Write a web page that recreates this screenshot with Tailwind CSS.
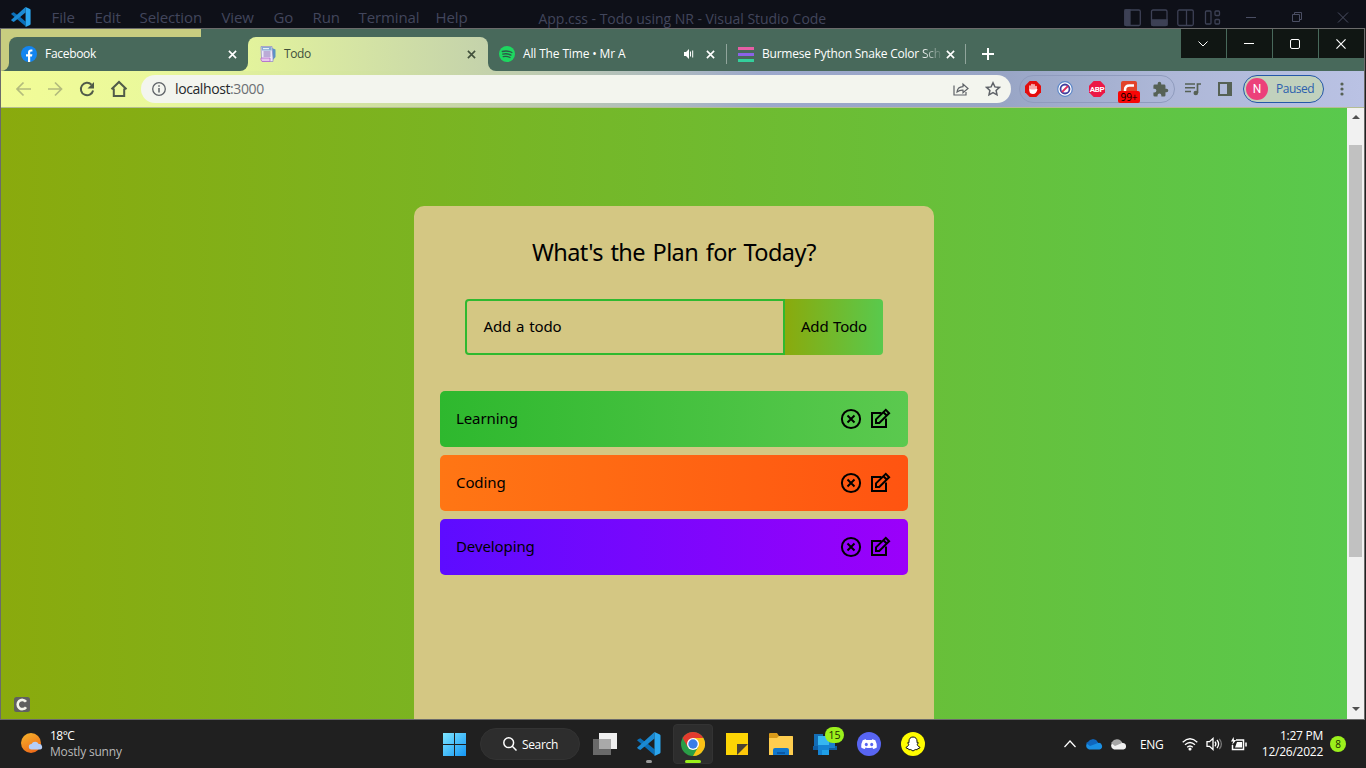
<!DOCTYPE html>
<html lang="en">
<head>
<meta charset="utf-8">
<title>Todo</title>
<script src="https://cdn.jsdelivr.net/npm/@tailwindcss/browser@4"></script>
</head>
<body class="w-[1366px] h-[768px] overflow-hidden bg-[#202020] font-['Open_Sans','Noto_Sans',sans-serif] flex flex-col">

<svg class="hidden">
  <defs>
    <symbol id="x" viewBox="0 0 10 10"><path d="M1 1l8 8M9 1l-8 8" stroke="currentColor" stroke-width="1.8" fill="none"/></symbol>
    <symbol id="vscode" viewBox="0 0 24 24">
      <path fill="#0a6fb8" d="M17.5 1L8 9.8 3.3 6.200 1.200 7.200 0 8.300 17.500 23.200V17.300L11 12z"/>
      <path fill="#1b8ad3" d="M17.500 0L17.500 6.500 3.300 17.900 1.200 16.900 0 15.700z"/>
      <path fill="#2ba7f0" d="M17.500 0l5.300 2.500q.700.400.700 1.200v16.600q0 .800-.700 1.200L17.500 24z"/>
    </symbol>
    <symbol id="close" viewBox="0 0 24 24"><circle cx="12" cy="12" r="9.100" fill="none" stroke="#000" stroke-width="2"/><path d="M8.500 8.500l7 7M15.500 8.500l-7 7" stroke="#000" stroke-width="2"/></symbol>
    <symbol id="edit" viewBox="0 0 24 24"><path d="M13.500 6H4v14h14V11.500" fill="none" stroke="#000" stroke-width="2"/><path d="M8 16v-3.600L17.800 2.900l3.300 3.300L11.300 16zM15.400 5.200l3.300 3.300" fill="none" stroke="#000" stroke-width="2"/></symbol>
  </defs>
</svg>

<!-- Editor title bar -->
<header class="h-7 shrink-0 bg-[#0e1018] flex items-end text-[#42465c]">
  <svg class="w-5 h-5 ml-[10.500px] mb-px"><use href="#vscode"/></svg>
  <nav class="flex ml-[21px] text-[15px] leading-[21px] tracking-[-0.100px]">
    <span class="w-[43px]">File</span><span class="w-[45px]">Edit</span><span class="w-[82px]">Selection</span><span class="w-[52px]">View</span><span class="w-[39px]">Go</span><span class="w-[46px]">Run</span><span class="w-[77px]">Terminal</span><span class="w-[103px]">Help</span>
  </nav>
  <span class="text-[14px] leading-[19px] whitespace-nowrap w-[585px] tracking-[-0.030px]">App.css - Todo using NR - Visual Studio Code</span>
  <svg class="w-[98px] h-[18px] mb-[1px]" viewBox="0 0 98 18" fill="none" stroke="#3d4155" stroke-width="1.300">
    <rect x=".8" y="1" width="15.500" height="15.500" rx="1.500"/><path d="M1 1h5v15H1z" fill="#3d4155"/>
    <rect x="27.500" y="1" width="15.500" height="15.500" rx="1.500"/><path d="M28 11h15v5H28z" fill="#3d4155"/>
    <rect x="53.800" y="1" width="15.500" height="15.500" rx="1.500"/><path d="M62.500 1v15"/>
    <rect x="81.500" y="2" width="5.500" height="13" rx="1"/><rect x="91" y="2" width="4.500" height="4.500" rx="1"/><rect x="91" y="10.500" width="4.500" height="4.500" rx="1"/>
  </svg>
  <svg class="w-[106px] h-[12px] ml-[22px] mb-[5px]" viewBox="0 0 106 12" fill="none" stroke="#4a4e63" stroke-width="1">
    <path d="M2 6.500h10M48.500 3.500h7v7h-7zM50.500 3V1.500h7v7H56M94 1.500l10 10M104 1.500l-10 10"/>
  </svg>
</header>

<!-- Browser window -->
<main class="h-[692px] shrink-0 w-[1365px] border border-[#6b6b6b] flex flex-col overflow-hidden">
  <!-- Tab strip -->
  <div class="h-[42px] shrink-0 bg-[#48695b] flex items-end relative text-white text-[12px]">
    <div class="absolute left-0 top-0 w-[200px] h-2 bg-[#c8cd80]"></div>
    <div class="absolute left-0 top-2 w-4 h-[34px] bg-[#c8cd80]"></div>
    <div class="absolute left-0 bottom-0 w-2 h-2 bg-[#48695b]"></div>
    <div class="absolute left-0 bottom-0 w-2 h-2 bg-[#c8cd80] rounded-br-lg"></div>
    <div class="w-[239px] ml-2 h-[34px] rounded-tl-lg bg-[#48695b] flex items-center relative pl-[12px]">
      <svg class="w-4 h-4" viewBox="0 0 16 16"><circle cx="8" cy="8" r="8" fill="#1385f0"/><path d="M7 16v-5.400H5V8.200h2V6.500C7 4.500 8.100 3.400 9.900 3.400l1.500.1v2h-1C9.500 5.500 9.200 6 9.200 6.600v1.600h2.200l-.4 2.400H9.200V16z" fill="#fff"/></svg>
      <span class="ml-2 tracking-[-0.300px]">Facebook</span>
      <svg class="w-[9px] h-[9px] ml-auto mr-[11px]"><use href="#x"/></svg>
    </div>
    <div class="w-[240px] h-[34px] rounded-t-lg bg-linear-to-r from-[#e3f39c] to-[#c4d2ab] flex items-center relative pl-[12px] text-[#41503b]">
      <div class="absolute -left-2 bottom-0 w-2 h-2 bg-[#e6f69a]"></div><div class="absolute -left-2 bottom-0 w-2 h-2 bg-[#48695b] rounded-br-lg"></div>
      <div class="absolute -right-2 bottom-0 w-2 h-2 bg-[#c4d2ab]"></div><div class="absolute -right-2 bottom-0 w-2 h-2 bg-[#48695b] rounded-bl-lg"></div>
      <svg class="w-4 h-4" viewBox="0 0 16 16"><path d="M12 2l3.500 1.500V11L12 15z" fill="#5b93c4"/><path d="M1 .5h11L13 12v3.500H2.500L1.500 12z" fill="#ece8f8" stroke="#8f86c4" stroke-width=".7"/><path d="M1.500 1h10v3.500H2z" fill="#86abd2"/><path d="M3 2.700h6" stroke="#fff"/><path d="M3.500 6h7M3.500 8h7M3.500 10h7" stroke="#8a6fb5" stroke-width="1"/><path d="M1 12h9v3.500H2Q.500 14 1 12z" fill="#e7c4ee" stroke="#b06ac8" stroke-width=".8"/></svg>
      <span class="ml-2 tracking-[-0.400px]">Todo</span>
      <svg class="w-[9px] h-[9px] ml-auto mr-[12px]"><use href="#x"/></svg>
    </div>
    <div class="w-[239px] h-[34px] flex items-center pl-[11px]">
      <svg class="w-4 h-4" viewBox="0 0 16 16"><circle cx="8" cy="8" r="8" fill="#1ed760"/><path d="M3.300 5.500q5-1.400 9.600 1M3.700 8.200q4.400-1.200 8.200.9M4.200 10.700q3.600-1 6.800.8" fill="none" stroke="#2c5947" stroke-width="1.300" stroke-linecap="round"/></svg>
      <span class="ml-2 tracking-[-0.150px]">All The Time • Mr A</span>
      <svg class="w-[10px] h-[10px] ml-auto" viewBox="0 0 10 10"><path d="M0 3h2l3-3v10L2 7H0z" fill="#fff"/><path d="M6.500 2.500v5M8.700 1.500v7" stroke="#fff"/></svg>
      <svg class="w-[9px] h-[9px] ml-[12px] mr-[12px]"><use href="#x"/></svg>
    </div>
    <div class="w-[239px] h-[34px] flex items-center">
      <i class="w-px h-5 bg-[#91a59c] -ml-px"></i>
      <div class="w-4 h-[15px] ml-[11px] flex flex-col justify-between"><i class="h-[3px] bg-[#e65fa5]"></i><i class="h-[3px] bg-[#8b62e8]"></i><i class="h-[3px] bg-[#34d09c]"></i></div>
      <span class="ml-2 w-[177px] whitespace-nowrap tracking-[-0.220px]">Burmese Python Snake Color <span class="bg-linear-to-r from-white to-[#5f7c70] bg-clip-text text-transparent">Sch</span></span>
      <svg class="w-[9px] h-[9px] ml-[7px]"><use href="#x"/></svg>
      <i class="w-px h-5 bg-[#91a59c] ml-auto"></i>
    </div>
    <svg class="w-3 h-3 ml-4 mb-[11px]" viewBox="0 0 12 12"><path d="M6 0v12M0 6h12" stroke="#fff" stroke-width="2"/></svg>
    <div class="ml-auto self-start flex gap-px">
      <div class="w-[45px] h-[29px] bg-[#101613] flex items-center justify-center pr-px"><svg class="w-[10px] h-3" viewBox="0 0 10 12"><path d="M.5 3.500L5 8l4.500-4.500" fill="none" stroke="#fff"/></svg></div>
      <div class="w-[45px] h-[29px] bg-[#101613] flex items-center justify-center pr-px"><i class="w-[10px] h-px bg-white"></i></div>
      <div class="w-[45px] h-[29px] bg-[#101613] flex items-center justify-center pr-px"><i class="w-[10px] h-[10px] border border-white rounded-xs"></i></div>
      <div class="w-[45px] h-[29px] bg-[#101613] flex items-center justify-center pr-px"><svg class="w-[10px] h-[10px]" viewBox="0 0 11 11"><path d="M.5.5l10 10M10.500.5l-10 10" stroke="#fff" stroke-width="1.300"/></svg></div>
    </div>
  </div>

  <!-- Toolbar -->
  <div class="h-[37px] shrink-0 flex items-center border-b border-[#b5bd93] bg-[linear-gradient(90deg,#f2fc97_0px,#eaf89b_150px,#d5e69f_340px,#c5d3ab_480px,#abb8c0_680px,#9ca8cc_760px,#98a5c5_1000px,#adb7d7_1160px,#bac2e4_1363px)]">
    <svg class="w-[116px] h-[18px] ml-[13px]" viewBox="0 0 116 18" fill="none">
      <path d="M17 9H3M9.500 2.500L3 9l6.500 6.500M34 9h13M41 2.500L47.500 9 41 15.500" stroke="#b3bb7d" stroke-width="1.700"/>
      <path d="M77.500 4.700A6.200 6.200 0 1 0 79.100 10.500" stroke="#505b49" stroke-width="2"/><path d="M80 2v6.500h-6.500z" fill="#505b49"/>
      <path d="M97.500 9.300L105 2l7.500 7.300M99.800 8.500v7.500h10.400V8.500" stroke="#505b49" stroke-width="2"/>
    </svg>
    <div class="ml-[11px] w-[870px] h-7 rounded-full bg-[#f3f5ee] flex items-center pl-[11px] text-[14px]">
      <svg class="w-[14px] h-[14px]" viewBox="0 0 14 14"><circle cx="7" cy="7" r="6.300" fill="none" stroke="#5f6368" stroke-width="1.300"/><path d="M7 6v4.500M7 3.200v1.600" stroke="#5f6368" stroke-width="1.500"/></svg>
      <span class="ml-[9px] -mt-px text-[#25282b] tracking-[-0.400px]">localhost<span class="text-[#6b6f73]">:3000</span></span>
      <svg class="w-4 h-4 ml-auto" viewBox="0 0 16 16" fill="none" stroke="#5f6368" stroke-width="1.200"><path d="M1 4.500v9.500h12v-3"/><path d="M4 11q.500-5 6-5.300V3l5 4.500-5 4.200V9.200Q6.500 9 4 11z"/></svg>
      <svg class="w-4 h-4 ml-4 mr-[10px]" viewBox="0 0 16 16"><path d="M8 1.800l1.900 4.100 4.500.5-3.300 3.100.9 4.400L8 11.700l-4 2.200.9-4.400L1.600 6.400l4.500-.5z" fill="none" stroke="#5f6368" stroke-width="1.500"/></svg>
    </div>
    <div class="ml-2 w-[156px] h-7 rounded-full border border-[#8f9bbd] flex items-center pl-[5px]">
      <svg class="w-4 h-4" viewBox="0 0 16 16"><path d="M4.700 0h6.600L16 4.700v6.600L11.300 16H4.700L0 11.300V4.700z" fill="#e40d0d"/><path d="M5 9V5M7 8V3.500M9 8V3.700M11 9.500V5.500" stroke="#fff" stroke-width="1.300" stroke-linecap="round"/><path d="M4.400 8.200h6L12.500 8Q11.500 13 8 13T4.400 10z" fill="#fff"/></svg>
      <svg class="w-4 h-4 ml-4" viewBox="0 0 16 16"><circle cx="8" cy="8" r="7.300" fill="#fff" stroke="#5b86c8" stroke-width="1.200"/><circle cx="8" cy="8" r="4.500" fill="none" stroke="#3f3f9e" stroke-width="1.800"/><path d="M11 5l-6 6" stroke="#e0315d" stroke-width="1.800"/></svg>
      <svg class="w-4 h-4 ml-4" viewBox="0 0 16 16"><path d="M4.700 0h6.600L16 4.700v6.600L11.300 16H4.700L0 11.300V4.700z" fill="#ec1745"/><text x="8" y="11" text-anchor="middle" font-size="8" font-family="Roboto" font-weight="700" fill="#fff" letter-spacing="-.3">ABP</text></svg>
      <div class="w-[22px] h-6 ml-[13px] mt-2 relative">
        <svg class="absolute left-[3px] top-0 w-4 h-4" viewBox="0 0 16 16"><rect width="16" height="16" rx="2" fill="#e2432a"/><path d="M13 4.500H8.500Q4 4.500 4 9v6" fill="none" stroke="#fff" stroke-width="2.500"/></svg>
        <span class="absolute left-0 top-[10px] w-[22px] h-3 rounded-xs bg-[#f80505] text-black text-[10px] leading-3 text-center">99+</span>
      </div>
      <svg class="w-[17px] h-[17px] ml-[12px]" viewBox="0 0 24 24"><path d="M20.500 11H19V7a2 2 0 0 0-2-2h-4V3.500a2.500 2.500 0 0 0-5 0V5H4a2 2 0 0 0-2 2v3.800h1.500a2.700 2.700 0 0 1 0 5.400H2V20a2 2 0 0 0 2 2h3.800v-1.500a2.700 2.700 0 0 1 5.400 0V22H17a2 2 0 0 0 2-2v-4h1.500a2.500 2.500 0 0 0 0-5z" fill="#566155"/></svg>
    </div>
    <svg class="w-4 h-[14px] ml-[10px]" viewBox="0 0 16 14"><path d="M0 2h10M0 5.700h10M0 9.500h6" stroke="#566155" stroke-width="1.500"/><path d="M12.500 11V2H16" fill="none" stroke="#566155" stroke-width="1.700"/><circle cx="10.800" cy="11" r="2.300" fill="#566155"/></svg>
    <svg class="w-[14px] h-[14px] ml-[17px]" viewBox="0 0 14 14"><path d="M1 1h12v12H1z" fill="none" stroke="#566155" stroke-width="2"/><path d="M9 1H13v12H9z" fill="#566155"/></svg>
    <div class="ml-[11px] w-[81px] h-7 rounded-full border border-[#2457a8] bg-[#c1d1bd] flex items-center pl-[2px]">
      <span class="w-[22px] h-[22px] rounded-full bg-[#ec407a] text-white text-[12px] leading-[22px] text-center font-['Roboto']">N</span>
      <span class="ml-2 text-[12px] text-[#2c5fae] tracking-[-0.500px]">Paused</span>
    </div>
    <svg class="w-1 h-4 ml-4" viewBox="0 0 4 16" fill="#566155"><circle cx="2" cy="3" r="1.600"/><circle cx="2" cy="8" r="1.600"/><circle cx="2" cy="13" r="1.600"/></svg>
  </div>

  <!-- Page -->
  <div class="flex-1 flex min-h-0">
    <section class="w-[1346px] relative bg-linear-to-r/srgb from-[#8aaa0d] to-[#59c94d] pt-[98px] font-['Noto_Sans',sans-serif] text-black overflow-hidden">
      <div class="w-[520px] h-[600px] mx-auto rounded-[10px] bg-[#d4c783] pt-8 flex flex-col items-center">
        <h1 class="text-[23.500px] leading-[28px] tracking-[-0.580px] [word-spacing:2px]">What's the Plan for Today?</h1>
        <form class="flex mt-[33px] text-[15px]">
          <div class="w-80 h-14 border-2 border-[#2fb92f] rounded-l flex items-center pl-[16.500px] pb-[2px] tracking-[-0.100px] [word-spacing:1px]">Add a todo</div>
          <div class="w-[98px] h-14 rounded-r bg-linear-to-r/srgb from-[#8aaa0d] to-[#59c94d] flex items-center justify-center pb-[2px] tracking-[-0.200px] [word-spacing:1px] whitespace-nowrap">Add Todo</div>
        </form>
        <ul class="mt-9 w-[468px] flex flex-col gap-2 text-[15px] tracking-[-0.100px]">
          <li class="h-14 rounded-[5px] px-4 flex items-center bg-linear-to-r/srgb from-[#2eb82e] to-[#5bc94f]"><span class="mr-auto pb-[2px]">Learning</span><svg class="w-6 h-6 mr-[5px]"><use href="#close"/></svg><svg class="w-6 h-6"><use href="#edit"/></svg></li>
          <li class="h-14 rounded-[5px] px-4 flex items-center bg-linear-to-r/srgb from-[#ff7614] to-[#ff5411]"><span class="mr-auto pb-[2px]">Coding</span><svg class="w-6 h-6 mr-[5px]"><use href="#close"/></svg><svg class="w-6 h-6"><use href="#edit"/></svg></li>
          <li class="h-14 rounded-[5px] px-4 flex items-center bg-linear-to-r/srgb from-[#5d0cff] to-[#9b00fa]"><span class="mr-auto pb-[2px]">Developing</span><svg class="w-6 h-6 mr-[5px]"><use href="#close"/></svg><svg class="w-6 h-6"><use href="#edit"/></svg></li>
        </ul>
      </div>
      <svg class="absolute left-[13px] bottom-[7px] w-4 h-[15px]" viewBox="0 0 16 15"><rect width="16" height="15" rx="2.500" fill="#606060"/><path d="M12 4.800A4.600 4.600 0 1 0 12 10.200" fill="none" stroke="#f4f4ea" stroke-width="2.600"/></svg>
    </section>
    <div class="w-[17px] bg-[#f1f1f1] flex flex-col items-center">
      <svg class="w-2 h-1 mt-[7px]" viewBox="0 0 8 4"><path d="M0 4l4-4 4 4z" fill="#505050"/></svg>
      <div class="w-[13px] h-[412px] mt-[26px] bg-[#c1c1c1]"></div>
      <svg class="w-2 h-1 mt-auto mb-2" viewBox="0 0 8 4"><path d="M0 0l4 4 4-4z" fill="#505050"/></svg>
    </div>
  </div>
</main>

<!-- Taskbar -->
<footer class="h-12 shrink-0 bg-[#202020] flex items-center text-white text-[12px]">
  <svg class="w-[22px] h-5 ml-[21px] mb-[2px]" viewBox="0 0 22 20"><defs><linearGradient id="sun" x1="0" y1="0" x2=".5" y2="1"><stop stop-color="#f6b62c"/><stop offset="1" stop-color="#ee6d1a"/></linearGradient></defs><circle cx="10" cy="10" r="10" fill="url(#sun)"/><path d="M10.500 16.500a2.700 2.700 0 0 1 0-5.400 4 4 0 0 1 7.200 0 2.700 2.700 0 0 1 1.300 5.400z" fill="#b5cdf7"/></svg>
  <div class="ml-[7px] w-[393px] leading-4"><div class="tracking-[-0.500px]">18°C</div><div class="text-[#b9b9b9] tracking-[-0.180px]">Mostly sunny</div></div>
  <svg class="w-[23px] h-[23px]" viewBox="0 0 23 23"><defs><linearGradient id="win" gradientUnits="userSpaceOnUse" x1="0" y1="0" x2="23" y2="23"><stop stop-color="#7ee6ff"/><stop offset="1" stop-color="#1496f5"/></linearGradient></defs><path d="M0 0h11v11H0zM12 0h11v11H12zM0 12h11v11H0zM12 12h11v11H12z" fill="url(#win)"/></svg>
  <div class="ml-[14px] w-[100px] h-8 rounded-full bg-[#2d2d2d] border border-[#333] flex items-center pl-[22px]">
    <svg class="w-[14px] h-[14px]" viewBox="0 0 14 14" fill="none" stroke="#fff" stroke-width="1.500"><circle cx="5.700" cy="5.700" r="4.900"/><path d="M9.300 9.300L13.500 13.500"/></svg>
    <span class="ml-[5px] mt-px tracking-[-0.350px]">Search</span>
  </div>
  <svg class="w-6 h-[22px] ml-[13px] mb-px" viewBox="0 0 24 22"><path d="M0 6h18v16H0z" fill="#696969"/><path d="M6 0h18v16H6z" fill="#efefef"/><path d="M6 6h12v10H6z" fill="#a9a9a9"/></svg>
  <div class="ml-5 w-6 h-12 relative grid place-items-center"><svg class="w-6 h-6"><use href="#vscode"/></svg><i class="absolute left-[9px] bottom-[5px] w-[6px] h-[3px] rounded-full bg-[#9a9a9a]"></i></div>
  <div class="ml-3 w-10 h-10 rounded bg-[#2d2d2d] border border-[#333] relative grid place-items-center">
    <svg class="w-6 h-6" viewBox="0 0 24 24"><circle cx="12" cy="12" r="12" fill="#2a9d47"/><path d="M12 12L1.600 6A12 12 0 0 1 22.400 6z" fill="#e33b2e"/><path d="M12 6h10.400A12 12 0 0 1 12 24l5.200-9z" fill="#fbc116"/><path d="M1.600 6L6.800 15 12 12V6z" fill="#e33b2e"/><circle cx="12" cy="12" r="6" fill="#fff"/><circle cx="12" cy="12" r="4.700" fill="#3a7de8"/></svg>
    <i class="absolute left-[11px] bottom-0 w-4 h-[3px] rounded-full bg-[#9bf01c]"></i>
  </div>
  <svg class="w-[22px] h-[22px] ml-[13px]" viewBox="0 0 22 22"><path d="M0 0h22v22H0z" fill="#fdc70a"/><path d="M0 0h22v11L11 22H0z" fill="#fdd505"/><path d="M11 11h11L11 22z" fill="#4a4232"/></svg>
  <svg class="w-6 h-[22px] ml-[21px]" viewBox="0 0 24 22"><path d="M0 1q0-1 1-1h7l2 3h13q1 0 1 1v6H0z" fill="#d99b1a"/><path d="M0 5h8l2-2h13q1 0 1 1v18H0z" fill="#fecd4f"/><path d="M4 22v-5q0-2 2-2h12q2 0 2 2v5z" fill="#1177cc"/><path d="M8 19h8v2H8z" fill="#0b58a5"/></svg>
  <div class="w-[31px] h-[30px] ml-5 relative">
    <svg class="absolute left-0 top-[4px] w-6 h-[22px]" viewBox="0 0 24 22"><path d="M1 1h9v14H1z" fill="#136cb5"/><path d="M0 13h24v4H0z" fill="#0f5da3"/><path d="M10 7h12v8H10z" fill="#1a7fce"/><path d="M5 3h11v9H5z" fill="#36b6f2"/><path d="M5 12h11v10H5z" fill="#1583d3"/><path d="M9 17h7v5H9z" fill="#1fa0e8"/></svg>
    <span class="absolute left-[12px] -top-[2px] w-[19px] h-4 rounded-full bg-[#9bf01c] text-[#1b2a00] text-[10.500px] leading-4 text-center">15</span>
  </div>
  <svg class="w-6 h-6 ml-[13px]" viewBox="0 0 24 24"><circle cx="12" cy="12" r="12" fill="#5865f2"/><path d="M8.700 7.200Q6.800 7.500 5.700 8.300 4 11.500 4.200 15.500q1.800 1.300 3.600 1.500l.8-1.400q3.400 1 6.800 0l.8 1.400q1.800-.2 3.600-1.500.2-4-1.500-7.200-1.100-.8-3-1.100l-.5.9h-5.600z" fill="#fff"/><ellipse cx="9.300" cy="12.500" rx="1.500" ry="1.700" fill="#5865f2"/><ellipse cx="14.700" cy="12.500" rx="1.500" ry="1.700" fill="#5865f2"/></svg>
  <svg class="w-6 h-6 ml-5" viewBox="0 0 24 24"><circle cx="12" cy="12" r="12" fill="#fffc00"/><path d="M12 5c-2.600 0-4 1.900-4 4v1.700l-1.500.3 1.400 1.300c-.4 1.400-1.500 2.500-2.900 3l.4.900 1.900.5.500 1 2-.1L12 19l2.200-1.400 2 .1.500-1 1.900-.5.400-.9c-1.400-.5-2.500-1.600-2.900-3l1.400-1.300-1.500-.3V9c0-2.100-1.400-4-4-4z" fill="#fff" stroke="#111" stroke-width="1"/></svg>
  <svg class="w-[62px] h-[14px] ml-[139px]" viewBox="0 0 62 14"><path d="M.5 10L6 4l5.500 6" fill="none" stroke="#fff" stroke-width="1.200"/><path d="M25 12.500a4 4 0 0 1-.5-7.500 5.500 5.500 0 0 1 9.500 1 3.300 3.300 0 0 1 1.500 6.500z" fill="#1a8fe3"/><path d="M24 5a5.500 5.500 0 0 1 10 1L26 9l-4-3z" fill="#0f66bd"/><path d="M50 12.500a4 4 0 0 1-.5-7.500 5.500 5.500 0 0 1 9 1 3.300 3.300 0 0 1 1 6.500z" fill="#efefef"/><path d="M48 5a5.500 5.500 0 0 1 10 1L51 9l-4-3z" fill="#a5a5a5"/></svg>
  <span class="ml-[14px] mt-[2px] tracking-[-0.300px] w-[42px]">ENG</span>
  <svg class="w-[66px] h-[14px]" viewBox="0 0 66 14" fill="none" stroke="#fff" stroke-width="1.300"><path d="M.7 5.200q7.300-6.800 14.600 0M3 7.800q5-4.600 10 0M5.200 10.300q2.800-2.600 5.600 0"/><circle cx="8" cy="12" r=".9" fill="#fff"/><path d="M25 4.700h2.500L31 1.500v11L27.500 9.300H25zM33 4.700q1.700 2.300 0 4.600M35 3q3.200 4 0 8"/><path d="M37.300 1.800q4.200 5.200 0 10.400" stroke="#777"/><path d="M54 3h7.500v9.500H50.500V8M64 5.500v4" stroke-width="1.500"/><path d="M55 5h5v5.500h-7z" fill="#fff" stroke="none"/><path d="M51.500 0L49 4.500h2.200L50 8l4.300-5H52z" fill="#fff" stroke="none"/></svg>
  <div class="ml-auto text-right leading-4 tracking-[-0.250px]"><div>1:27 PM</div><div>12/26/2022</div></div>
  <span class="ml-[7px] mr-5 w-4 h-4 rounded-full bg-[#9bf01c] text-[#1b2a00] text-[10px] leading-4 text-center">8</span>
</footer>
</body>
</html>
